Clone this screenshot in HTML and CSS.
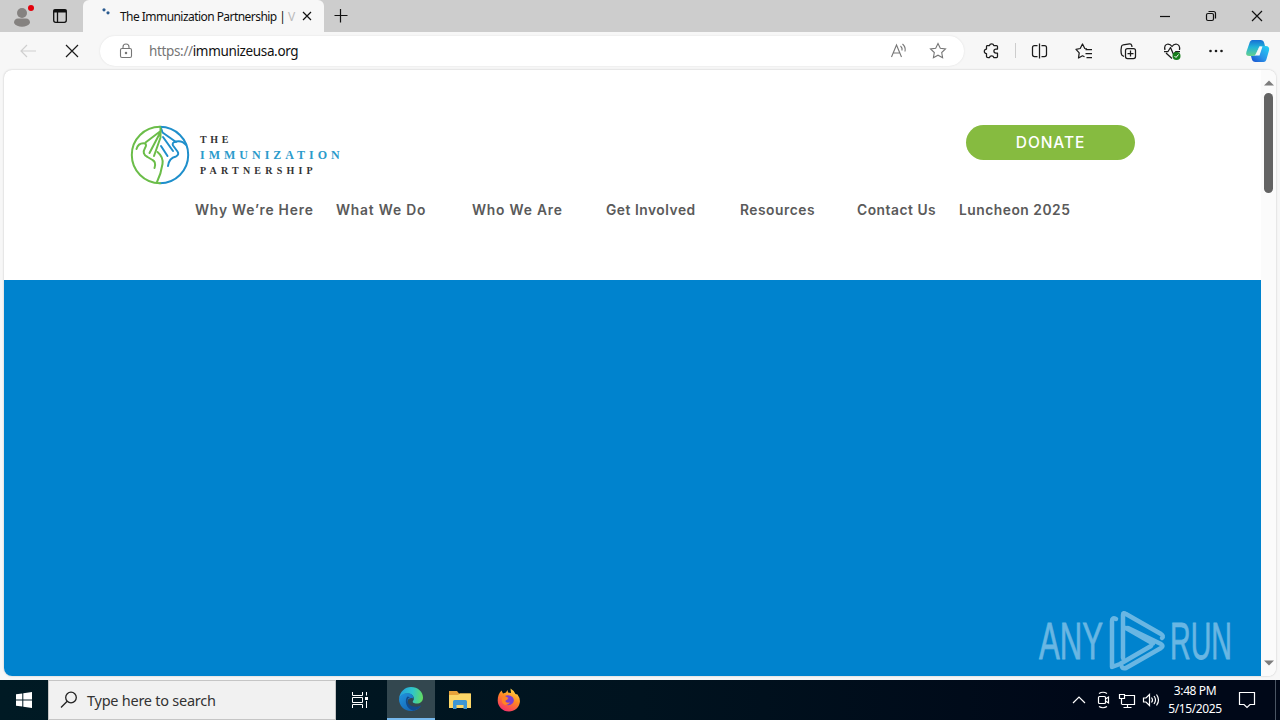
FILE: index.html
```
<!DOCTYPE html>
<html lang="en">
<head>
    <meta charset="UTF-8">
    <meta name="viewport" content="width=device-width, initial-scale=1.0">
    <title>The Immunization Partnership</title>
    <link rel="stylesheet" href="styles.css">
</head>
<body>

    <!-- Tab strip -->
    <div class="tabstrip">
        <div class="tab-tools">
            <svg width="80" height="32" viewBox="0 0 80 32">
                <circle cx="22" cy="13" r="5" fill="#858280"/>
                <path d="M14 23c0-3 1.500-4.500 4-4.500h8c2.500 0 4 1.500 4 4.500-1.500 2.700-4.500 3.700-8 3.700s-6.500-1-8-3.700z" fill="#858280"/>
                <circle cx="31" cy="8" r="3" fill="#e3000b"/>
                <rect x="53.700" y="9.700" width="12.600" height="12.600" rx="2" fill="none" stroke="#111" stroke-width="1.300"/>
                <path d="M53.500 11h13" fill="none" stroke="#111" stroke-width="3"/>
                <path d="M57.500 12v10" fill="none" stroke="#111" stroke-width="1.300"/>
            </svg>
        </div>
        <div class="tab">
            <svg class="spinner" width="16" height="16" viewBox="0 0 16 16">
                <circle cx="3" cy="1.800" r="1.600" fill="#2b5b90"/>
                <circle cx="7" cy="4.800" r="1.600" fill="#2b5b90"/>
            </svg>
            <span class="tab-title">The Immunization Partnership | <i>V</i></span>
            <svg class="tab-close" width="10" height="10" viewBox="0 0 10 10"><path d="M1 1l8 8M9 1l-8 8"/></svg>
        </div>
        <svg class="new-tab" width="16" height="16" viewBox="0 0 16 16"><path d="M1.500 7.500h13M7.500 1v13.500"/></svg>
        <div class="window-buttons">
            <svg width="12" height="12" viewBox="0 0 12 12"><path d="M1 6.500h10"/></svg>
            <svg width="12" height="12" viewBox="0 0 12 12"><rect x="1.500" y="3.500" width="7" height="7" rx="1.500"/><path d="M3.500 1.500H8.500Q10.500 1.500 10.500 3.500V8.500"/></svg>
            <svg width="12" height="12" viewBox="0 0 12 12"><path d="M1 1l10 10M11 1L1 11"/></svg>
        </div>
    </div>

    <!-- Toolbar -->
    <div class="toolbar">
        <svg class="back" width="18" height="16" viewBox="0 0 18 16"><path d="M17 8H2M8 2L2 8l6 6"/></svg>
        <svg class="stop" width="14" height="14" viewBox="0 0 14 14"><path d="M1 1l12 12M13 1L1 13"/></svg>
        <div class="address">
            <svg class="lock" width="14" height="16" viewBox="0 0 14 16"><rect x="1.500" y="5.500" width="11" height="9" rx="1.500"/><path d="M4 5.500V4a3 3 0 0 1 6 0v1.500"/><circle cx="7" cy="10" r=".7"/></svg>
            <span class="url"><em>https://</em>immunizeusa.org</span>
            <svg class="read" width="18" height="16" viewBox="0 0 18 16"><path d="M1.500 14L6.500 2l5 12M3.200 10h6.600M10.500 3q2 1.700 1.500 4.500M12.500 1q3.500 3 2.500 7.500"/></svg>
            <svg class="star" width="18" height="18" viewBox="0 0 18 18"><path d="M9 1.500l2.300 4.700 5.200.7-3.800 3.600.9 5.200L9 13.200l-4.600 2.500.9-5.200L1.500 6.900l5.200-.7z"/></svg>
        </div>
        <div class="tools">
            <svg width="300" height="38" viewBox="980 32 300 38">
                <g fill="none" stroke="#1b1b1b" stroke-width="1.250" stroke-linejoin="round">
                    <path d="M987 45.500h2.500a2.200 2.200 0 0 1 4.300 0h2.700q1 0 1 1v2.500h-1.500a2.100 2.100 0 0 0 0 4.200h1.500v3.300q0 1-1 1h-2.700a2.200 2.200 0 0 0-4.300 0H988q-1.500 0-1.500-1v-3a2.200 2.200 0 0 1 0-4.400V46.500q0-1 .5-1z"/>
                    <path d="M1015.500 43v15" stroke="#cdcdcd" stroke-width="1"/>
                    <path d="M1037.500 45.500h-3q-2 0-2 2v7q0 2 2 2h3M1041.500 45.500h3q2 0 2 2v7q0 2-2 2h-3M1039.500 43.500v15"/>
                    <path d="M1087 48.800l-2.200-.3-2.300-4.500-2.300 4.500-4.200.8 3.200 3.500-.7 5.200 4-2.200 2 1M1085.500 49.500h6.500M1085.500 53.500h6.500M1086.500 57.500h5.500"/>
                    <path d="M1124 56.500l-2-1.300q-1-1-1-5.200l.5-3.500q.2-1.500 1.700-1.700l6.300-1q1.800-.2 2.200 1.500l.3 1.700"/>
                    <rect x="1125.500" y="48.500" width="10" height="10" rx="2"/>
                    <path d="M1130.500 50.500v6M1127.500 53.500h6"/>
                    <path d="M1165 50q-1.300-5.500 3-6 2.500 0 4 2.500 1.500-2.500 4-2.500 4.300.5 3.500 6M1166 53l6 5.500M1164 51.500h4l2.500-4 3 7 2.500-3h4"/>
                </g>
                <circle cx="1176.500" cy="56" r="4" fill="#167d1b"/>
                <path d="M1174.500 56l1.500 1.500 2.500-3" fill="none" stroke="#fff"/>
                <g fill="#1b1b1b"><circle cx="1210.500" cy="51" r="1.300"/><circle cx="1216" cy="51" r="1.300"/><circle cx="1221.500" cy="51" r="1.300"/></g>
                <defs>
                    <linearGradient id="cpLeft" x1="0" y1="0" x2="0" y2="1"><stop offset="0" stop-color="#176fd5"/><stop offset=".45" stop-color="#22b3d8"/><stop offset="1" stop-color="#67d08c"/></linearGradient>
                    <linearGradient id="cpRight" x1="1" y1="0" x2="0" y2="1"><stop offset="0" stop-color="#23d4f5"/><stop offset=".55" stop-color="#2b93e8"/><stop offset="1" stop-color="#174ccd"/></linearGradient>
                </defs>
                <path d="M1252.500 40h8q3 0 3.700 3l.8 3h-3.500q-2.300 0-3 2.300l-2 5.200q-.8 2.500-3.500 2.500h-3.500q-4.500 0-3-4.500l2.800-8q.8-3.500 3.200-3.500z" fill="url(#cpLeft)"/>
                <path d="M1263.500 62h-8q-3 0-3.700-3l-.8-3h2.500q2.300 0 3-2.300l2-5.200q.8-2.500 3.500-2.500h3.500q4.500 0 3.500 4.500l-2.300 8q-.8 3.500-3.200 3.500z" fill="url(#cpRight)"/>
                <path d="M1259.500 46.500h3l-3 9h-4.500z" fill="#f7f7f7"/>
            </svg>
        </div>
    </div>

    <!-- Page -->
    <div class="viewport">
        <div class="page">
            <header class="site-header">
                <div class="header-top">
                    <div class="logo">
                        <svg width="60" height="60" viewBox="0 0 60 60" fill="none" stroke-width="2" stroke-linecap="round" stroke-linejoin="round">
                            <g stroke="#1f8fcb">
                                <path d="M30 1.800a28.200 28.200 0 0 1 0 56.400"/>
                                <path d="M31 3l1.500 4.500L46 17M33 12l10 14M31 21l6.500 10"/>
                                <path d="M56 20q-4-5-10-3.500-4.500 1-3 4l4.500 6q2 3-1.500 5-7 1.500-8 9.500"/>
                            </g>
                            <g stroke="#6bbd49">
                                <path d="M30 1.800a28.200 28.200 0 0 0 0 56.400"/>
                                <path d="M30.500 3v9.500L24 31M30.500 7L19.500 28M30 6.500L15.500 17.500"/>
                                <path d="M6.500 24q2-6.500 8.500-5.500 2 1 0 4.500-3.500 6 2.500 9l5 3q4 2 2 8M27.500 27q6 5 5 12-1.500 10-5.500 18"/>
                            </g>
                        </svg>
                        <div class="logo-text">
                            <span class="l1">THE</span>
                            <span class="l2">IMMUNIZATION</span>
                            <span class="l3">PARTNERSHIP</span>
                        </div>
                    </div>
                    <a class="donate">DONATE</a>
                </div>
                <nav class="menu">
                    <a class="wide">Why We’re Here</a>
                    <a class="wide">What We Do</a>
                    <a class="wide">Who We Are</a>
                    <a>Get Involved</a>
                    <a>Resources</a>
                    <a>Contact Us</a>
                    <a>Luncheon 2025</a>
                </nav>
            </header>
            <section class="hero"></section>
        </div>
        <div class="scrollbar">
            <svg width="10" height="6" viewBox="0 0 10 6"><path d="M0 5.500L5 .5l5 5z"/></svg>
            <div class="thumb"></div>
            <svg width="10" height="6" viewBox="0 0 10 6"><path d="M0 .5L5 5.500l5-5z"/></svg>
        </div>
    </div>

    <!-- Taskbar -->
    <div class="taskbar">
        <div class="start">
            <svg width="16" height="16" viewBox="0 0 16 16"><path d="M0 2.300L6.300 1.400V7.500H0zM7.300 1.200L16 0V7.500H7.300zM0 8.500h6.300v6.100L0 13.700zM7.300 8.500H16V16L7.300 14.800z" fill="#fff"/></svg>
        </div>
        <div class="search">
            <svg width="18" height="18" viewBox="0 0 18 18"><circle cx="11" cy="6.500" r="5.300"/><path d="M7.200 10.300L1 16.500"/></svg>
            <span>Type here to search</span>
        </div>
        <div class="task">
            <svg width="20" height="16" viewBox="0 0 20 16" fill="none" stroke="#fff"><path d="M1.500 0v3.500h10V0M1.500 16v-3.500h10V16M1.500 5.500h10v5h-10zM15.500 0v3.500M15.500 9v7"/><path d="M14 6.500h3" stroke-width="3"/></svg>
        </div>
        <div class="task active">
            <svg width="24" height="24" viewBox="0 0 24 24">
                <defs>
                    <linearGradient id="edgeTop" x1="0" y1=".4" x2="1" y2=".5"><stop offset="0" stop-color="#249fdd"/><stop offset=".55" stop-color="#2fc5cb"/><stop offset="1" stop-color="#62dc61"/></linearGradient>
                    <linearGradient id="edgeLow" x1="0" y1="0" x2="1" y2="1"><stop offset="0" stop-color="#2094df"/><stop offset="1" stop-color="#1259a7"/></linearGradient>
                </defs>
                <path d="M0 11.500C1 4.500 6 0 12 0c7 0 12 5 12 10.500 0 4-3 6-6 6-3.500 0-5-1.300-4-2.500 2.500-3-.5-7.500-5-7.500-4.500 0-7.500 2-9 5z" fill="url(#edgeTop)"/>
                <path d="M0 12C1 8 4.500 6.300 8.500 6.300c3.500 0 6.500 2 6 5.700-1-1.500-5-1.500-6 2-1 4 4 7.500 9 6.200 2-.4 3.500-1.200 4.300-1.500C20 22 16 24 12 24 5 24 0 18.500 0 12z" fill="url(#edgeLow)"/>
                <path d="M8.500 9.500C5 13 7 22 14.500 23.700 18 23 20.500 21 22 18.600c-6 3-14 0-13.500-5 .2-2 1.200-3 2.500-3.400z" fill="#124a8c"/>
            </svg>
        </div>
        <div class="task">
            <svg width="22" height="20" viewBox="0 0 22 20">
                <path d="M0 1h8l2 2.500h11.500V18H0z" fill="#e8a33a"/>
                <path d="M0 5h9l2-1.500h11V18H0z" fill="#fcd667"/>
                <path d="M4 19v-7.500q0-1.500 1.500-1.500h11q1.500 0 1.500 1.500V19h-3.500v-4h-7v4z" fill="#3d96d3"/>
            </svg>
        </div>
        <div class="task">
            <svg width="24" height="24" viewBox="0 0 24 24">
                <defs><linearGradient id="fox" x1=".8" y1="0" x2=".3" y2="1"><stop offset="0" stop-color="#ffe14b"/><stop offset=".45" stop-color="#ff8a20"/><stop offset="1" stop-color="#f52e6d"/></linearGradient></defs>
                <path d="M4.500 2.500l1.500 3 3-1 1.500-2.500.5 2.500 3 .5-.5-4.500q3.500 2 5 5.500l2 .5q3 4 2.300 8C21.800 20 17.500 23.500 12 23.500 5.500 23.500.7 18.500.7 12.500.7 8 2 5 4.500 2.500z" fill="url(#fox)"/>
                <path d="M8 8q4-2 7.500 1 2.500 3 .5 6-4 4-8 1-3-2.500-1-5l3 .5 1.500-1.500z" fill="#7a3fd1"/>
                <path d="M5 10q3-1.500 5 .3 1.500 1-.5 1.700-1.500.5-1 1.500 2 2 4.500.8-2 3.700-5.500 2.500Q4 15 5 10z" fill="#ff8424"/>
            </svg>
        </div>
        <div class="tray">
            <svg width="100" height="40" viewBox="1068 680 100 40" fill="none" stroke="#fff" stroke-width="1.200">
                <path d="M1073 703l6-6 6 6"/>
                <rect x="1098.500" y="696.500" width="7" height="7" rx="1"/>
                <path d="M1105.500 699l3-2v6l-3-2M1099 693.500q4-2.500 8 0M1099 706.500q4 2.500 8 0"/>
                <path d="M1124 695.500h10.500v9H1122M1127.500 704.500v3M1123.500 707.500h8M1119.500 694.500h5v4h-5zM1121.500 698.500v6"/>
                <path d="M1143.500 698h2.500l3.500-3.500v11l-3.500-3.500h-2.500zM1151.500 697.500q2 2.500 0 5M1154 696q3 4 0 8M1156.500 694.500q4 5.500 0 11"/>
            </svg>
            <div class="clock">3:48 PM<br>5/15/2025</div>
            <svg class="notes" width="18" height="18" viewBox="0 0 18 18"><path d="M1.500 1.500h15v12h-4.500l-3 3-3-3h-4.500z" fill="none" stroke="#fff" stroke-width="1.200"/></svg>
        </div>
    </div>

    <!-- Watermark laid over the page -->
    <svg class="watermark" width="210" height="68" viewBox="0 0 210 68">
        <text x="3" y="50" font-size="52" textLength="64" lengthAdjust="spacingAndGlyphs">ANY</text>
        <g fill="none" stroke="#8cc8ea" stroke-width="4.500" stroke-linejoin="round" stroke-linecap="round">
            <path d="M80 10q-4-2-4 2v46l8-3 31-18"/>
            <path d="M87 49V6q0-3 3-1l35 20q3 2 1 4M90 19l27 15.500"/>
            <path d="M92 19l33 16q3 2 0 4L90 59q-3 1-4-1"/>
        </g>
        <text x="134" y="50" font-size="52" textLength="62" lengthAdjust="spacingAndGlyphs">RUN</text>
    </svg>

</body>
</html>
```
FILE: styles.css
```
* {
    box-sizing: border-box;
}

body {
    margin: 0;
    width: 1280px;
    height: 720px;
    overflow: hidden;
    display: flex;
    flex-direction: column;
    font-family: "Noto Sans", "Open Sans", sans-serif;
    background-color: #f7f7f7;
}

svg {
    display: block;
    flex: none;
}

/* Tab strip */
.tabstrip {
    display: flex;
    align-items: center;
    height: 32px;
    background-color: #cdcdcd;
}

.tab-tools {
    width: 83px;
}

.tab {
    display: flex;
    align-items: center;
    width: 241px;
    height: 32px;
    padding-left: 17px;
    background-color: #f7f7f7;
    border-radius: 6px 6px 0 0;
}

.spinner {
    margin: 0 3px 0 1px;
}

.tab-title {
    width: 177px;
    font-size: 12px;
    letter-spacing: -0.55px;
    white-space: nowrap;
    color: #111;
}

.tab-title i {
    font-style: normal;
    color: #bbb;
}

.tab-close, .new-tab, .window-buttons svg {
    fill: none;
    stroke: #111;
    stroke-width: 1.2;
}

.tab-close {
    margin-left: 5px;
}

.new-tab {
    margin-left: 9px;
}

.window-buttons {
    display: flex;
    gap: 34px;
    margin-left: auto;
    margin-right: 17px;
}

/* Toolbar */
.toolbar {
    display: flex;
    align-items: center;
    height: 38px;
}

.back, .stop {
    fill: none;
    stroke: #1b1b1b;
    stroke-width: 1.2;
}

.back {
    margin-left: 19px;
    stroke: #cfcfcf;
}

.stop {
    margin-left: 28px;
}

.address {
    display: flex;
    align-items: center;
    width: 864px;
    height: 30px;
    margin-left: 21px;
    padding: 0 17px 0 19px;
    border-radius: 15px;
    background-color: #fff;
    box-shadow: 0 0 2px #ddd;
}

.address svg {
    fill: none;
    stroke: #767676;
    stroke-width: 1.1;
}

.url {
    margin-left: 16px;
    font-size: 13.5px;
    letter-spacing: -0.35px;
    color: #111;
}

.url em {
    font-style: normal;
    color: #767676;
}

.read {
    margin-left: auto;
}

.star {
    margin-left: 21px;
}

.tools {
    margin-left: auto;
}

/* Page */
.viewport {
    display: flex;
    height: 606px;
    margin: 0 4px 4px;
    border-radius: 8px;
    overflow: hidden;
    background-color: #fff;
    box-shadow: 0 0 2px #bbb;
}

.page {
    width: 1257px;
}

.site-header {
    height: 210px;
    padding: 55px 126px 0;
}

.header-top {
    display: flex;
    justify-content: space-between;
    align-items: flex-start;
}

.logo {
    display: flex;
}

.logo-text {
    display: flex;
    flex-direction: column;
    margin: 7px 0 0 10px;
    font-family: "Liberation Serif", serif;
    font-weight: bold;
    line-height: 15px;
    white-space: nowrap;
    color: #333;
}

.l1 {
    font-size: 10px;
    letter-spacing: 3.6px;
}

.l2 {
    font-size: 12px;
    letter-spacing: 4px;
    line-height: 17px;
    color: #2b9bcb;
}

.l3 {
    font-size: 10px;
    line-height: 14px;
    letter-spacing: 4.2px;
}

.donate {
    width: 169px;
    height: 35px;
    border-radius: 18px;
    background-color: #86bb40;
    color: #fff;
    font: 500 15.5px/35px Inter, sans-serif;
    letter-spacing: 0.9px;
    text-align: center;
}

.menu {
    display: grid;
    grid-template-columns: 141px 136px 134px 134px 117px 102px auto;
    margin: 15px 0 0 65px;
    font: 600 13.8px/20px Inter, sans-serif;
    letter-spacing: 0.52px;
    color: #5a5a5a;
    white-space: nowrap;
}

.menu .wide {
    letter-spacing: 0.8px;
}

.hero {
    height: 396px;
    background-color: #0083ce;
}

.scrollbar {
    display: flex;
    flex-direction: column;
    align-items: center;
    width: 15px;
    padding: 10px 0;
    background-color: #fbfbfb;
}

.scrollbar svg {
    fill: #7d7d7d;
}

.thumb {
    width: 9px;
    height: 100px;
    margin: 7px 0 auto;
    border-radius: 5px;
    background-color: #636363;
}

/* Taskbar */
.taskbar {
    display: flex;
    height: 40px;
    background: linear-gradient(to right, #001a24, #00131f 50%, #000818 85%);
}

.start, .task {
    display: flex;
    align-items: center;
    justify-content: center;
    width: 48px;
}

.task {
    width: 49px;
}

.task.active {
    width: 48px;
    margin-left: 2px;
    background-color: #33474f;
    border-bottom: 2px solid #76b9ed;
}

.search {
    display: flex;
    align-items: center;
    width: 288px;
    padding-left: 11px;
    border: 1px solid #c5c5c5;
    background-color: #f1f1f1;
    font-size: 14.5px;
    letter-spacing: -0.25px;
    color: #333;
}

.search svg {
    margin-right: 9px;
    fill: none;
    stroke: #222;
    stroke-width: 1.3;
}

.tray {
    display: flex;
    align-items: center;
    width: 208px;
    margin-left: auto;
    margin-right: 4px;
    border-right: 1px solid #4a5563;
}

.clock {
    width: 54px;
    font-size: 12px;
    line-height: 18px;
    letter-spacing: -0.4px;
    text-align: center;
    white-space: nowrap;
    color: #fff;
}

.notes {
    margin-left: 16px;
}

.watermark {
    position: absolute;
    left: 1036px;
    top: 609px;
    opacity: 0.75;
}

.watermark text {
    font-family: "Liberation Sans", sans-serif;
    fill: #8cc8ea;
    stroke: #8cc8ea;
    stroke-width: 0.8;
}
```
